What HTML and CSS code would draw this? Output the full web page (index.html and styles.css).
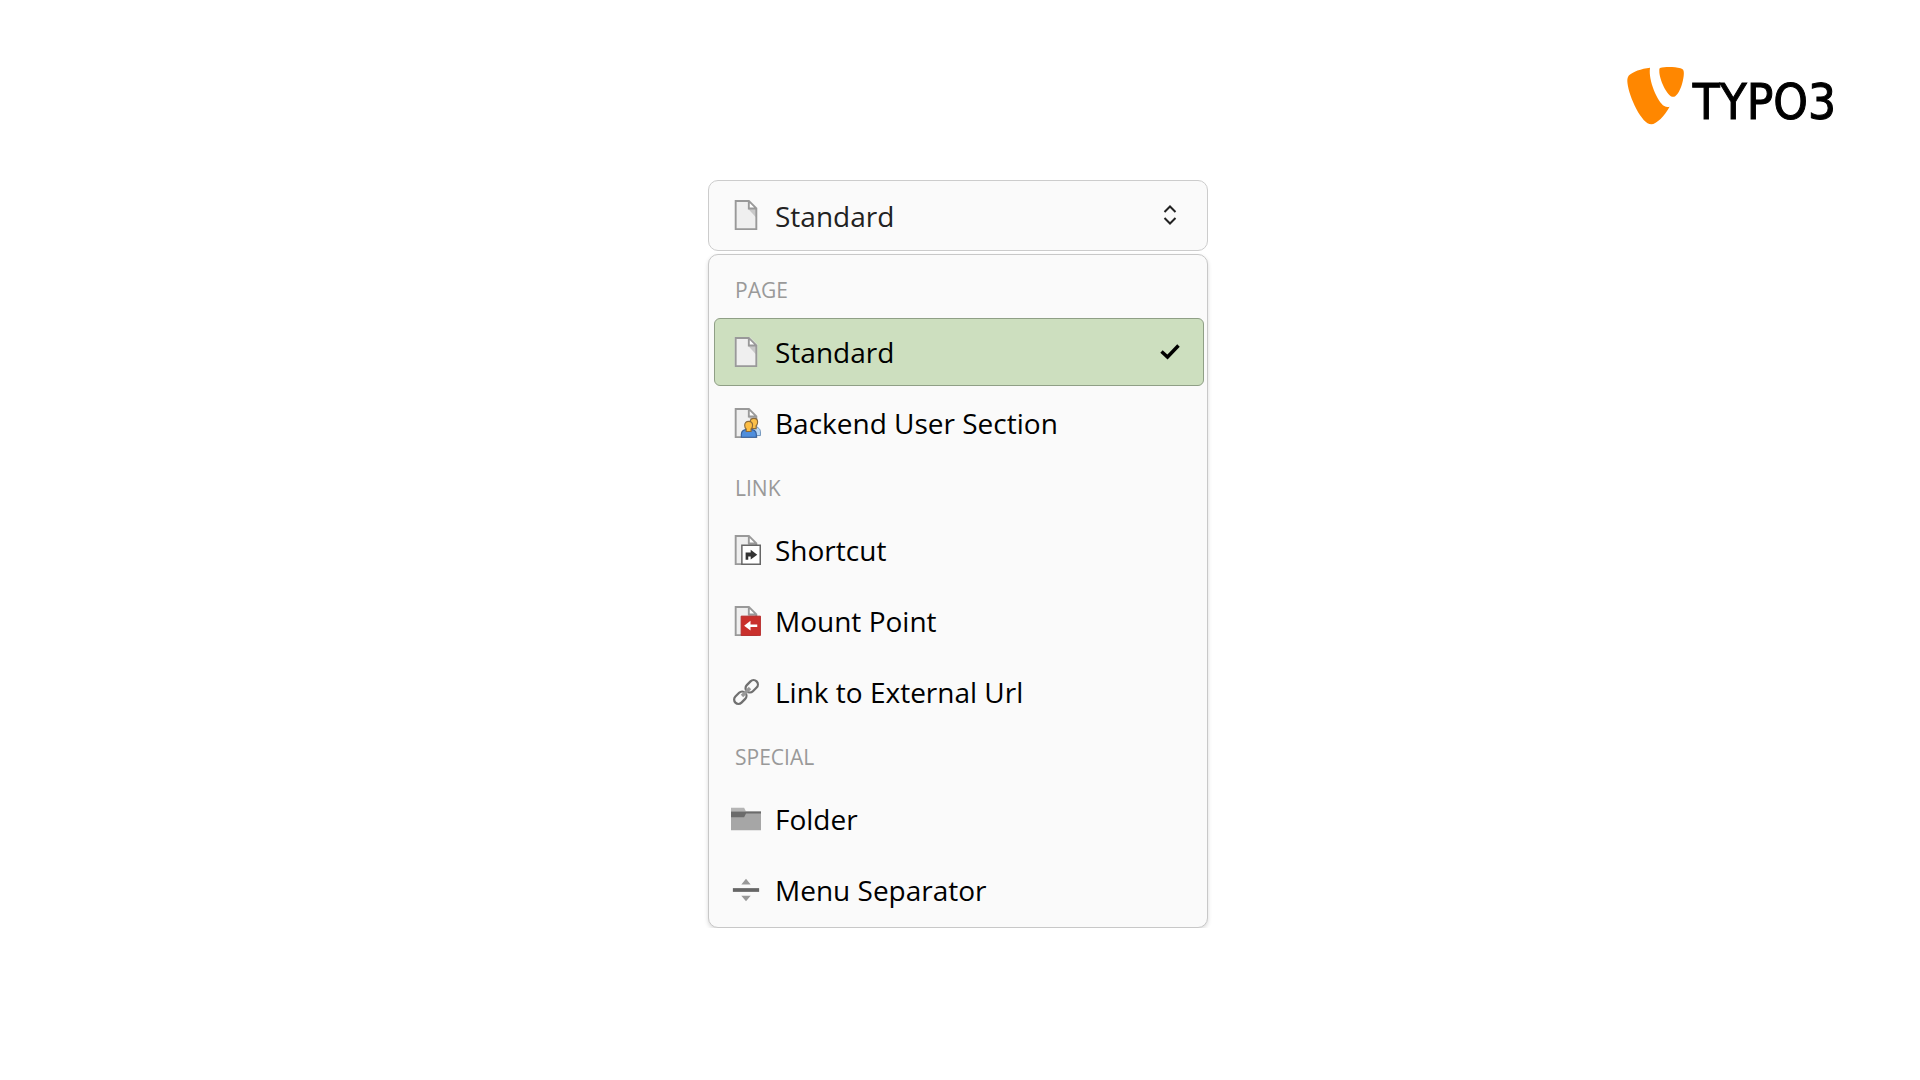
FILE: index.html
```html
<!DOCTYPE html>
<html lang="en">
<head>
  <meta charset="UTF-8" />
  <meta name="viewport" content="width=device-width, initial-scale=1.0" />
  <title>TYPO3 page type</title>
  <link rel="stylesheet" href="styles.css">
</head>
<body>
  <!-- shared page sheet, reused by the page type icons -->
  <svg class="sprite" aria-hidden="true">
    <symbol id="sheet" viewBox="0 0 16 16">
      <path fill="#efefef" d="M2 0h8l4 4v12H2z" />
      <path fill="#c8c8c8" d="M9 4.500l4.500 5V4.500z" />
      <path fill="#fff" d="M9.500.5v4h4z" />
      <path fill="none" stroke="#999" d="M2.500.5h7l4 4v11h-11zM9.500.5v4h4" />
    </symbol>
  </svg>

  <header class="header">
    <a class="logo" href="#">
      <svg class="logo-mark" viewBox="54 46 174 178" aria-hidden="true">
        <path fill="#ff8700" d="M123 51C97 54 70 63 59 75c-5 6-5 15-4 23 5 42 43 124 72 124 15 0 41-26 55-53-6 2-11 1-16-2-20-13-49-77-43-116z" />
        <path fill="#ff8700" d="M153 52c17-5 44-4 62 1 8 2 10 6 10 14 0 25-15 72-32 72-18 0-43-54-42-79 0-4 0-6 2-8z" />
      </svg>
      <span class="logo-text">TYPO3</span>
    </a>
  </header>

  <main class="picker">
    <div class="trigger">
      <svg class="icon trigger-icon" aria-hidden="true"><use href="#sheet" /></svg>
      <select class="trigger-select" aria-label="Page type">
        <option selected>Standard</option>
        <option>Backend User Section</option>
        <option>Shortcut</option>
        <option>Mount Point</option>
        <option>Link to External Url</option>
        <option>Folder</option>
        <option>Menu Separator</option>
      </select>
      <svg class="mark trigger-mark" viewBox="0 0 20 20" aria-hidden="true">
        <path fill="none" stroke="#222" stroke-width="2" d="M4.500 7L10 1.500 15.500 7M4.500 13l5.500 5.500 5.500-5.500" />
      </svg>
    </div>

    <div class="menu">
      <h2 class="group">PAGE</h2>
      <button class="item selected" type="button">
        <svg class="icon" aria-hidden="true"><use href="#sheet" /></svg>
        <span class="label">Standard</span>
        <svg class="mark" viewBox="0 0 20 20" aria-hidden="true">
          <path fill="none" stroke="#000" stroke-width="3.500" d="M1.500 9.500L7.500 15 18.500 3.500" />
        </svg>
      </button>
      <button class="item" type="button">
        <svg class="icon" viewBox="0 0 16 16" aria-hidden="true">
          <use href="#sheet" />
          <path fill="#b9d7f5" stroke="#6a8fb8" stroke-width=".5" d="M9 14.700v-2c0-1.700 1.300-2.700 3.200-2.700s3.500 1 3.500 2.700v2z" />
          <path fill="#fbc04a" stroke="#8a6a3a" stroke-width=".6" d="M10.200 7.500c0-1.300.8-2 2-2s2 .7 2 2c0 1-.3 1.600-.8 2v1.500h-2.400V9.500c-.5-.4-.8-1-.8-2z" />
          <path fill="#4f8edc" stroke="#345f9c" stroke-width=".6" d="M5.500 15.600V14c0-1.600 1.300-2.600 4-2.600s4 1 4 2.600v1.600z" />
          <path fill="#fdbd42" stroke="#8a6a3a" stroke-width=".6" d="M7.300 9.200c0-1.300.8-2.100 2.100-2.100s2.100.8 2.100 2.100c0 1-.3 1.600-.8 2v1.300H8.100v-1.300c-.5-.4-.8-1-.8-2z" />
        </svg>
        <span class="label">Backend User Section</span>
      </button>

      <h2 class="group">LINK</h2>
      <button class="item" type="button">
        <svg class="icon" viewBox="0 0 16 16" aria-hidden="true">
          <use href="#sheet" />
          <path fill="#fff" stroke="#666" stroke-width=".8" d="M5.800 5.400h9.800v10.200H5.800z" />
          <path fill="#333" d="M7.800 13.200v-3.900h2.700V7.900l3.500 2.600-3.500 2.600v-1.600H9.200v1.700z" />
        </svg>
        <span class="label">Shortcut</span>
      </button>
      <button class="item" type="button">
        <svg class="icon" viewBox="0 0 16 16" aria-hidden="true">
          <use href="#sheet" />
          <path fill="#c9302c" stroke="#b52b2b" stroke-width=".5" d="M5.400 5.400h10.300v10.300H5.400z" />
          <path fill="#fff" d="M7 10.500l3.400-2.600v1.900H14v1.400h-3.600v1.900z" />
        </svg>
        <span class="label">Mount Point</span>
      </button>
      <button class="item" type="button">
        <svg class="icon" viewBox="0 0 16 16" aria-hidden="true">
          <g fill="none" stroke="#707070" stroke-width="1.200" transform="rotate(-45 8 8)">
            <rect x="0" y="5.700" width="7.400" height="4.600" rx="2.300" />
            <rect x="8.600" y="5.700" width="7.400" height="4.600" rx="2.300" />
            <path stroke="#999" stroke-width="1.800" d="M5 8h6" />
          </g>
        </svg>
        <span class="label">Link to External Url</span>
      </button>

      <h2 class="group">SPECIAL</h2>
      <button class="item" type="button">
        <svg class="icon" viewBox="0 0 16 16" aria-hidden="true">
          <path fill="#a6a6a6" d="M0 4h16v10H0z" />
          <path fill="#b5b5b5" d="M0 2h7l1 2H0z" />
          <path fill="#6b6b6b" d="M0 4h16v1H8l-1 2H0z" />
        </svg>
        <span class="label">Folder</span>
      </button>
      <button class="item" type="button">
        <svg class="icon" viewBox="0 0 16 16" aria-hidden="true">
          <path fill="#666" d="M1 7h14v2H1z" />
          <path fill="#999" d="M8 2l2.500 3h-5zM8 14l2.500-3h-5z" />
        </svg>
        <span class="label">Menu Separator</span>
      </button>
    </div>
  </main>
</body>
</html>
```
FILE: styles.css
```css
* {
  box-sizing: border-box;
}

body {
  margin: 0;
  padding: 0 84px 0 80px;
  background: #fff;
  color: #000;
  font-family: "Open Sans", "Noto Sans", sans-serif;
  font-size: 28px;
}

.sprite {
  display: none;
}

.header {
  display: flex;
  justify-content: flex-end;
  height: 180px;
  padding-top: 66px;
}

.logo {
  display: flex;
  gap: 8px;
  height: 60px;
  color: #000;
  text-decoration: none;
}

.logo-mark {
  width: 58px;
  height: 59px;
}

.logo-text {
  font-family: "DejaVu Sans Condensed", "DejaVu Sans", sans-serif;
  font-size: 49px;
  line-height: 74px;
  -webkit-text-stroke: 1px #000;
}

.picker {
  display: flex;
  flex-direction: column;
  gap: 3px;
  max-width: 500px;
  margin: 0 auto;
}

.trigger {
  position: relative;
}

.trigger-select {
  appearance: none;
  display: block;
  width: 100%;
  height: 71px;
  padding: 0 60px 0 66px;
  border: 1px solid #ccc;
  border-radius: 10px;
  background: #fafafa;
  color: #222;
  font: inherit;
}

.trigger-icon {
  position: absolute;
  top: 20px;
  left: 23px;
}

.trigger-mark {
  position: absolute;
  top: 25px;
  right: 28px;
}

.menu {
  display: flex;
  flex-direction: column;
  gap: 3px;
  padding: 7px 3px 3px 5px;
  border: 1px solid #c8c8c8;
  border-radius: 10px;
  background: #fafafa;
  box-shadow: 0 2px 4px rgba(0, 0, 0, 0.15);
}

.group {
  margin: 0;
  padding: 3px 0 0 21px;
  color: #999;
  font-size: 21px;
  font-weight: 400;
  line-height: 50px;
}

.item {
  display: flex;
  align-items: center;
  gap: 14px;
  height: 68px;
  padding: 0 23px 0 16px;
  border: 1px solid transparent;
  border-radius: 6px;
  background: none;
  color: #000;
  font: inherit;
  text-align: left;
}

.selected {
  border-color: #8f9f86;
  background: #cddfbf;
}

.label {
  flex: 1;
}

.icon {
  flex: none;
  width: 30px;
  height: 30px;
}

.mark {
  flex: none;
  width: 20px;
  height: 20px;
}
```
